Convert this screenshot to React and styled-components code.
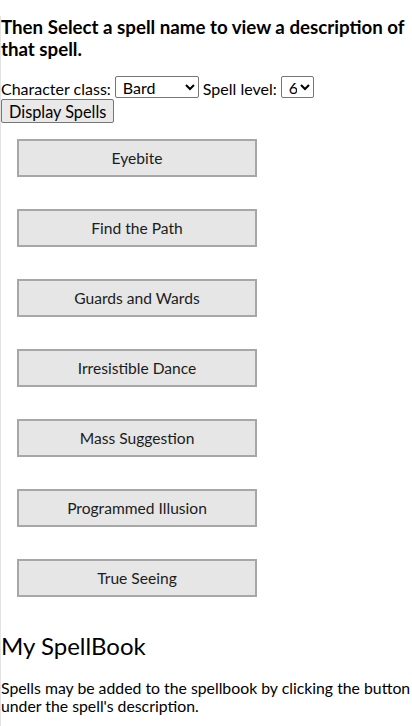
import React, { useState } from "react";
import styled, { createGlobalStyle } from "styled-components";

const GlobalStyle = createGlobalStyle`
  body {
    margin: 0;
    font-family: Lato, "Open Sans", sans-serif;
    color: #000;
    background: #fff;
  }
`;

const Page = styled.div`
  min-height: 100vh;
  border-left: 1px solid #e3e3e3;
  box-sizing: border-box;
`;

const Instructions = styled.h3`
  font-size: 18.72px;
  font-weight: 700;
  margin: 16px 0 16px;
  line-height: 22px;
`;

const Controls = styled.div`
  display: flex;
  align-items: center;
  gap: 4px;
  height: 22px;
  font-size: 16px;
`;

const Label = styled.span`
  line-height: 19px;
  padding-top: 3px;
`;

const Select = styled.select`
  font-family: Lato, sans-serif;
  font-size: 16px;
  height: 22px;
  width: ${({ $width }) => $width}px;
  border: 1px solid #767676;
  border-radius: 2px;
  background: #fff;
  color: #000;
  padding: 0 0 0 3px;
  margin: 0;
`;

const DisplayButton = styled.button`
  display: block;
  font-family: Lato, sans-serif;
  font-size: 16.3px;
  height: 24px;
  padding: 0 7px;
  margin: 1px 0 0;
  background: #e9e9e9;
  color: #000;
  border: 1px solid #767676;
  border-radius: 2px;
`;

const SpellList = styled.div`
  display: flex;
  flex-direction: column;
  align-items: flex-start;
`;

const SpellButton = styled.button`
  width: 240px;
  height: 38px;
  margin: 16px 16px;
  background: #e6e6e6;
  border: 2px solid #a7a7a7;
  font-family: Lato, sans-serif;
  font-size: 15.6px;
  color: #1c1c1c;
  padding: 0;
`;

const BookTitle = styled.h2`
  font-size: 24px;
  font-weight: 400;
  margin: 18px 0 19px;
  line-height: 29px;
`;

const Note = styled.p`
  font-size: 15.8px;
  line-height: 18px;
  margin: 0;
`;

const spells = [
  "Eyebite",
  "Find the Path",
  "Guards and Wards",
  "Irresistible Dance",
  "Mass Suggestion",
  "Programmed Illusion",
  "True Seeing",
];

export default function App() {
  const [cls, setCls] = useState("Bard");
  const [level, setLevel] = useState("6");

  return (
    <Page>
      <GlobalStyle />
      <Instructions>
        Then Select a spell name to view a description of that spell.
      </Instructions>
      <Controls>
        <Label>Character class:</Label>
        <Select $width={84} value={cls} onChange={(e) => setCls(e.target.value)}>
          {["Bard", "Cleric", "Druid", "Paladin", "Ranger", "Sorcerer", "Warlock", "Wizard"].map((c) => (
            <option key={c}>{c}</option>
          ))}
        </Select>
        <Label>Spell level:</Label>
        <Select $width={33} value={level} onChange={(e) => setLevel(e.target.value)}>
          {["0", "1", "2", "3", "4", "5", "6", "7", "8", "9"].map((l) => (
            <option key={l}>{l}</option>
          ))}
        </Select>
      </Controls>
      <DisplayButton>Display Spells</DisplayButton>
      <SpellList>
        {spells.map((s) => (
          <SpellButton key={s}>{s}</SpellButton>
        ))}
      </SpellList>
      <BookTitle>My SpellBook</BookTitle>
      <Note>
        Spells may be added to the spellbook by clicking the button under the
        spell's description.
      </Note>
    </Page>
  );
}
